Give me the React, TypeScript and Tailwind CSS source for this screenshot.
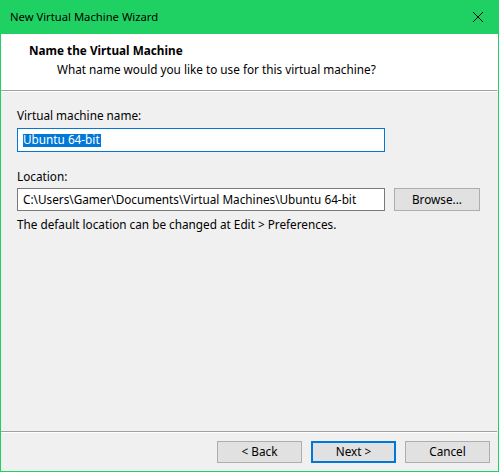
export default function App() {
  const font = { fontFamily: '"Noto Sans", "Liberation Sans", sans-serif' };
  return (
    <div
      className="w-[499px] h-[472px] bg-[#1fd163] flex flex-col text-[11.75px] text-black leading-none"
      style={font}
    >
      {/* Title bar */}
      <div className="h-[34px] flex items-center justify-between pl-[10px] pr-[14px]">
        <span className="text-[11.25px] text-black">New Virtual Machine Wizard</span>
        <svg width="12" height="12" viewBox="0 0 12 12" className="mr-[1px]">
          <path d="M1 1 L11 11 M11 1 L1 11" stroke="#000" strokeWidth="1" />
        </svg>
      </div>
      <div className="flex-1 mx-[1px] mb-[1px] bg-[#f0f0f0] flex flex-col">
        {/* Header */}
        <div className="h-[56px] bg-white flex flex-col pl-[28px] pt-[10px] gap-[6px]">
          <div className="font-bold h-[13px] flex items-center">Name the Virtual Machine</div>
          <div className="pl-[28px] h-[13px] flex items-center text-[#000]">
            What name would you like to use for this virtual machine?
          </div>
        </div>
        <div className="h-[1px] bg-[#a0a0a0] mr-[1px]" />
        <div className="h-[1px] bg-white mr-[1px]" />
        {/* Content */}
        <div className="flex flex-col pl-[16px] pt-[17px] flex-1">
          <div className="h-[13px] flex items-center">Virtual machine name:</div>
          <div className="mt-[6px] w-[368px] h-[24px] border border-[#0078d7] bg-white flex items-center pl-[5px]">
            <span className="bg-[#0078d7] text-white h-[13px] flex items-center pr-[1px]">Ubuntu 64-bit</span>
          </div>
          <div className="h-[13px] flex items-center mt-[18px]">Location:</div>
          <div className="mt-[5px] flex items-center gap-[9px]">
            <div className="w-[368px] h-[23px] border border-[#7a7a7a] bg-white flex items-center pl-[5px]">
              C:\Users\Gamer\Documents\Virtual Machines\Ubuntu 64-bit
            </div>
            <div className="w-[86px] h-[23px] border border-[#adadad] bg-[#e1e1e1] flex items-center justify-center">
              Browse...
            </div>
          </div>
          <div className="h-[13px] flex items-center mt-[7px]">
            The default location can be changed at Edit &gt; Preferences.
          </div>
        </div>
        {/* Footer */}
        <div className="h-[1px] bg-[#a0a0a0] mr-[1px]" />
        <div className="h-[1px] bg-white mr-[1px]" />
        <div className="h-[38px] flex items-start justify-end gap-[9px] pr-[8px] pt-[8px]">
          <div className="w-[85px] h-[22px] border border-[#adadad] bg-[#e1e1e1] flex items-center justify-center">
            &lt; Back
          </div>
          <div className="w-[85px] h-[22px] border-2 border-[#0078d7] bg-[#e1e1e1] flex items-center justify-center">
            Next &gt;
          </div>
          <div className="w-[85px] h-[22px] border border-[#adadad] bg-[#e1e1e1] flex items-center justify-center">
            Cancel
          </div>
        </div>
      </div>
    </div>
  );
}
